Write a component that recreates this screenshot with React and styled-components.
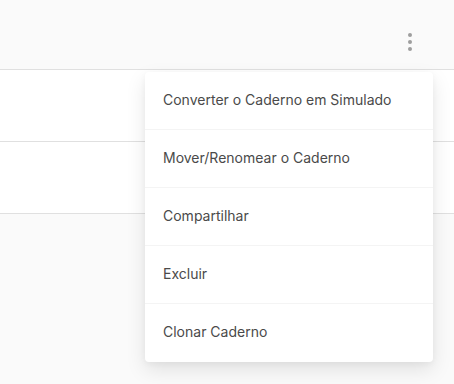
import React from "react";
import styled, { createGlobalStyle } from "styled-components";

const GlobalStyle = createGlobalStyle`
  html, body {
    margin: 0;
    padding: 0;
    background: #fafafa;
    font-family: Inter, "Liberation Sans", Arial, sans-serif;
  }
`;

const menuItems = [
  "Converter o Caderno em Simulado",
  "Mover/Renomear o Caderno",
  "Compartilhar",
  "Excluir",
  "Clonar Caderno",
];

const App = () => (
  <Page>
    <GlobalStyle />
    <TopBar>
      <KebabButton aria-label="Mais opções">
        <svg width="24" height="24" viewBox="0 0 24 24">
          <circle cx="12" cy="5" r="2" />
          <circle cx="12" cy="12" r="2" />
          <circle cx="12" cy="19" r="2" />
        </svg>
      </KebabButton>
    </TopBar>
    <Row />
    <Row />
    <Menu>
      {menuItems.map((label) => (
        <MenuItem key={label}>{label}</MenuItem>
      ))}
    </Menu>
  </Page>
);

const Page = styled.div`
  position: relative;
  width: 100%;
  height: 384px;
  background: #fafafa;
  overflow: hidden;
`;

const TopBar = styled.div`
  height: 69px;
  display: flex;
  align-items: center;
  justify-content: flex-end;
  padding-right: 32px;
  background: #fafafa;
  border-bottom: 1px solid #e0e0e0;
  box-sizing: content-box;
`;

const KebabButton = styled.button`
  border: 0;
  background: none;
  padding: 0;
  margin-top: 15px;
  display: flex;
  fill: #9e9e9e;
  cursor: pointer;
`;

const Row = styled.div`
  height: 71px;
  background: #fff;
  border-bottom: 1px solid #e0e0e0;
`;

const Menu = styled.ul`
  position: absolute;
  top: 72px;
  left: 145px;
  width: 288px;
  margin: 0;
  padding: 0;
  list-style: none;
  background: #fff;
  border-radius: 4px;
  box-shadow: 0 8px 20px rgba(0, 0, 0, 0.1), 0 2px 6px rgba(0, 0, 0, 0.04);
`;

const MenuItem = styled.li`
  height: 57px;
  display: flex;
  align-items: center;
  padding: 0 18px 3px;
  box-sizing: border-box;
  height: 58px;
  font-size: 14px;
  color: #4a4a4a;
  border-bottom: 1px solid #f4f4f4;
  &:last-child {
    border-bottom: 0;
  }
`;

export default App;
